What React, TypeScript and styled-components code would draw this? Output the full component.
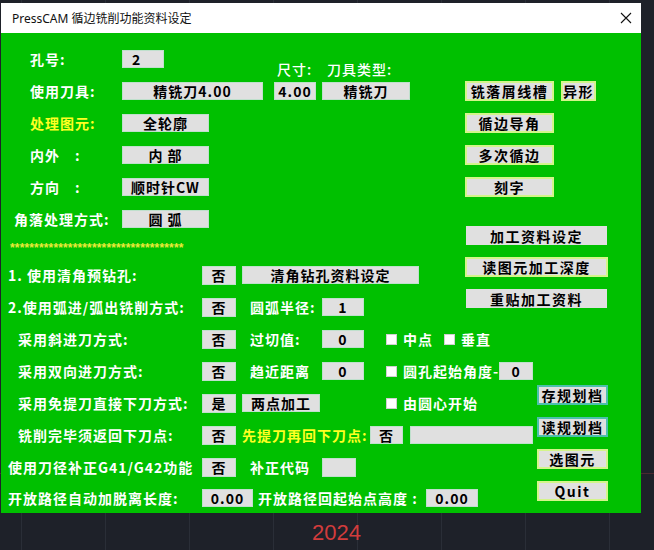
import styled, { createGlobalStyle } from 'styled-components';

const GlobalStyle = createGlobalStyle`
  html, body {
    margin: 0;
    padding: 0;
  }
  body {
    width: 654px;
    height: 550px;
    overflow: hidden;
    background-color: #1e2129;
    background-image:
      linear-gradient(to bottom, transparent 473px, #4a2a30 473px, #4a2a30 474px, transparent 474px),
      linear-gradient(to right, #2a2e37 1px, transparent 1px);
    background-size: 100% 100%, 84px 100%;
    background-position: 0 0, 21px 0;
    font-family: 'Noto Sans CJK SC', 'Noto Sans', sans-serif;
  }
`;

type Tone = 'lime' | 'teal' | 'plain';

const toneBorder: Record<Tone, string> = {
  lime: '2px solid #d4f58a',
  teal: '2px solid #4cc0ac',
  plain: '1px solid #e0e0e0',
};

const Window = styled.div`
  width: 640px;
  margin: 3px 0 0 1px;
`;

const TitleBar = styled.div`
  height: 30px;
  box-sizing: border-box;
  background: #ffffff;
  display: flex;
  align-items: center;
  justify-content: space-between;
  padding: 0 9px 0 11px;
`;

const Title = styled.span`
  font-family: 'Noto Sans', 'Noto Sans CJK SC', sans-serif;
  font-size: 12px;
  color: #111;
`;

const Body = styled.div`
  height: 480px;
  box-sizing: border-box;
  background: #00c000;
  padding-top: 10px;
`;

const Section = styled.div`
  display: flex;
`;

const Column = styled.div<{ $w?: number }>`
  display: flex;
  flex-direction: column;
  width: ${(p) => (p.$w ? `${p.$w}px` : 'auto')};
  flex-shrink: 0;
`;

const SideButtons = styled.div<{ $top: number }>`
  display: flex;
  flex-direction: column;
  align-items: flex-start;
  gap: 12px;
  padding-top: ${(p) => p.$top}px;
`;

const ButtonRow = styled.div`
  display: flex;
  gap: 7px;
`;

const Row = styled.div<{ $h?: number }>`
  display: flex;
  align-items: center;
  height: ${(p) => p.$h ?? 32}px;
`;

const Label = styled.span<{ $w?: number; $pl?: number; $ml?: number; $yellow?: boolean }>`
  box-sizing: border-box;
  flex-shrink: 0;
  width: ${(p) => (p.$w ? `${p.$w}px` : 'auto')};
  padding-left: ${(p) => p.$pl ?? 0}px;
  margin-left: ${(p) => p.$ml ?? 0}px;
  color: ${(p) => (p.$yellow ? '#ffff22' : '#ffffff')};
  font-size: 14px;
  font-weight: 700;
  letter-spacing: 1px;
  line-height: 16px;
  white-space: pre;
`;

const Caption = styled(Label)`
  align-self: flex-end;
  margin-bottom: -2px;
  font-weight: 500;
`;

const Field = styled.div<{ $w: number; $h?: number; $ml?: number; $left?: boolean }>`
  box-sizing: border-box;
  flex-shrink: 0;
  width: ${(p) => p.$w}px;
  height: ${(p) => p.$h ?? 18}px;
  margin-left: ${(p) => p.$ml ?? 0}px;
  padding-left: ${(p) => (p.$left ? 9 : 0)}px;
  display: flex;
  align-items: center;
  justify-content: ${(p) => (p.$left ? 'flex-start' : 'center')};
  background: #e0e0e0;
  border: 1px solid #bfe0cc;
  color: #000;
  font-size: 14px;
  font-weight: 700;
  letter-spacing: 1px;
  line-height: 1;
  white-space: pre;
`;

const Button = styled.button<{ $w: number; $h?: number; $tone?: Tone; $ml?: number; $mt?: number }>`
  box-sizing: border-box;
  width: ${(p) => p.$w}px;
  height: ${(p) => p.$h ?? 20}px;
  margin: ${(p) => p.$mt ?? 0}px 0 0 ${(p) => p.$ml ?? 0}px;
  padding: 0;
  display: flex;
  align-items: center;
  justify-content: center;
  background: #e0e0e0;
  border: ${(p) => toneBorder[p.$tone ?? 'lime']};
  border-radius: 0;
  color: #000;
  font-family: inherit;
  font-size: 14px;
  font-weight: 700;
  letter-spacing: 1.5px;
  line-height: 1;
`;

const Check = styled.span<{ $ml: number }>`
  display: flex;
  align-items: center;
  gap: 6px;
  margin-left: ${(p) => p.$ml}px;
  &::before {
    content: '';
    width: 11px;
    height: 11px;
    box-sizing: border-box;
    background: #ffffff;
    border: 1px solid #d0d0d0;
  }
`;

const Stars = styled.div`
  height: 24px;
  box-sizing: border-box;
  padding: 2px 0 0 9px;
  color: #eaea3a;
  font-family: 'Liberation Sans', sans-serif;
  font-size: 12px;
  font-weight: 700;
  letter-spacing: 0.15px;
  line-height: 22px;
`;

const Year = styled.div`
  margin: 7px 0 0 312px;
  color: #d23c3c;
  font-family: 'Liberation Sans', sans-serif;
  font-size: 22px;
  line-height: 26px;
`;

const CloseIcon = () => (
  <svg width="12" height="12" viewBox="0 0 12 12">
    <path d="M1 1 L11 11 M11 1 L1 11" stroke="#111" strokeWidth="1.1" fill="none" />
  </svg>
);

export default function App() {
  return (
    <>
      <GlobalStyle />
      <Window>
        <TitleBar>
          <Title>PressCAM 循边铣削功能资料设定</Title>
          <CloseIcon />
        </TitleBar>
        <Body>
          <Section>
            <Column $w={464}>
              <Row>
                <Label $w={121} $pl={29}>孔号:</Label>
                <Field $w={42} $left>2</Field>
                <Caption $ml={113} $w={50}>尺寸:</Caption>
                <Caption>刀具类型:</Caption>
              </Row>
              <Row>
                <Label $w={121} $pl={29}>使用刀具:</Label>
                <Field $w={141}>精铣刀4.00</Field>
                <Field $w={42} $ml={11}>4.00</Field>
                <Field $w={88} $ml={6}>精铣刀</Field>
              </Row>
              <Row>
                <Label $w={121} $pl={29} $yellow>处理图元:</Label>
                <Field $w={87}>全轮廓</Field>
              </Row>
              <Row>
                <Label $w={121} $pl={29}>内外　:</Label>
                <Field $w={87}>内 部</Field>
              </Row>
              <Row>
                <Label $w={121} $pl={29}>方向　:</Label>
                <Field $w={87}>顺时针CW</Field>
              </Row>
              <Row>
                <Label $w={121} $pl={13}>角落处理方式:</Label>
                <Field $w={87}>圆 弧</Field>
              </Row>
              <Stars>{'*'.repeat(36)}</Stars>
              <Row>
                <Label $w={201} $pl={7}>1. 使用清角预钻孔:</Label>
                <Field $w={34} $h={19}>否</Field>
                <Field $w={177} $ml={6}>清角钻孔资料设定</Field>
              </Row>
              <Row>
                <Label $w={201} $pl={7}>2.使用弧进/弧出铣削方式:</Label>
                <Field $w={34} $h={19}>否</Field>
                <Label $ml={14} $w={72}>圆弧半径:</Label>
                <Field $w={42}>1</Field>
              </Row>
            </Column>
            <SideButtons $top={38}>
              <ButtonRow>
                <Button $w={89}>铣落屑线槽</Button>
                <Button $w={35}>异形</Button>
              </ButtonRow>
              <Button $w={89}>循边导角</Button>
              <Button $w={89}>多次循边</Button>
              <Button $w={89}>刻字</Button>
              <Button $w={141} $h={19} $tone="plain" $ml={1} $mt={17}>加工资料设定</Button>
              <Button $w={143}>读图元加工深度</Button>
              <Button $w={141} $h={19} $tone="plain" $ml={1}>重贴加工资料</Button>
            </SideButtons>
          </Section>
          <Section>
            <Column $w={536}>
              <Row>
                <Label $w={201} $pl={17}>采用斜进刀方式:</Label>
                <Field $w={34} $h={19}>否</Field>
                <Label $ml={14} $w={72}>过切值:</Label>
                <Field $w={42}>0</Field>
                <Check $ml={22}><Label>中点</Label></Check>
                <Check $ml={11}><Label>垂直</Label></Check>
              </Row>
              <Row>
                <Label $w={201} $pl={17}>采用双向进刀方式:</Label>
                <Field $w={34} $h={19}>否</Field>
                <Label $ml={14} $w={72}>趋近距离</Label>
                <Field $w={42}>0</Field>
                <Check $ml={22}><Label>圆孔起始角度-</Label></Check>
                <Field $w={34}>0</Field>
              </Row>
              <Row>
                <Label $w={201} $pl={17}>采用免提刀直接下刀方式:</Label>
                <Field $w={34} $h={19}>是</Field>
                <Field $w={78} $ml={6}>两点加工</Field>
                <Check $ml={66}><Label>由圆心开始</Label></Check>
              </Row>
              <Row>
                <Label $w={201} $pl={17}>铣削完毕须返回下刀点:</Label>
                <Field $w={34} $h={19}>否</Field>
                <Label $ml={6} $w={128} $yellow>先提刀再回下刀点:</Label>
                <Field $w={33}>否</Field>
                <Field $w={123} $ml={7}>{''}</Field>
              </Row>
              <Row>
                <Label $w={201} $pl={7}>使用刀径补正G41/G42功能</Label>
                <Field $w={34} $h={19}>否</Field>
                <Label $ml={14} $w={72}>补正代码</Label>
                <Field $w={34} $h={19}>{''}</Field>
              </Row>
              <Row $h={30}>
                <Label $w={201} $pl={7}>开放路径自动加脱离长度:</Label>
                <Field $w={51}>0.00</Field>
                <Label $ml={5} $w={168}>开放路径回起始点高度 :</Label>
                <Field $w={52}>0.00</Field>
              </Row>
            </Column>
            <SideButtons $top={62}>
              <Button $w={71} $tone="teal">存规划档</Button>
              <Button $w={71} $tone="teal">读规划档</Button>
              <Button $w={71}>选图元</Button>
              <Button $w={71}>Quit</Button>
            </SideButtons>
          </Section>
        </Body>
      </Window>
      <Year>2024</Year>
    </>
  );
}
